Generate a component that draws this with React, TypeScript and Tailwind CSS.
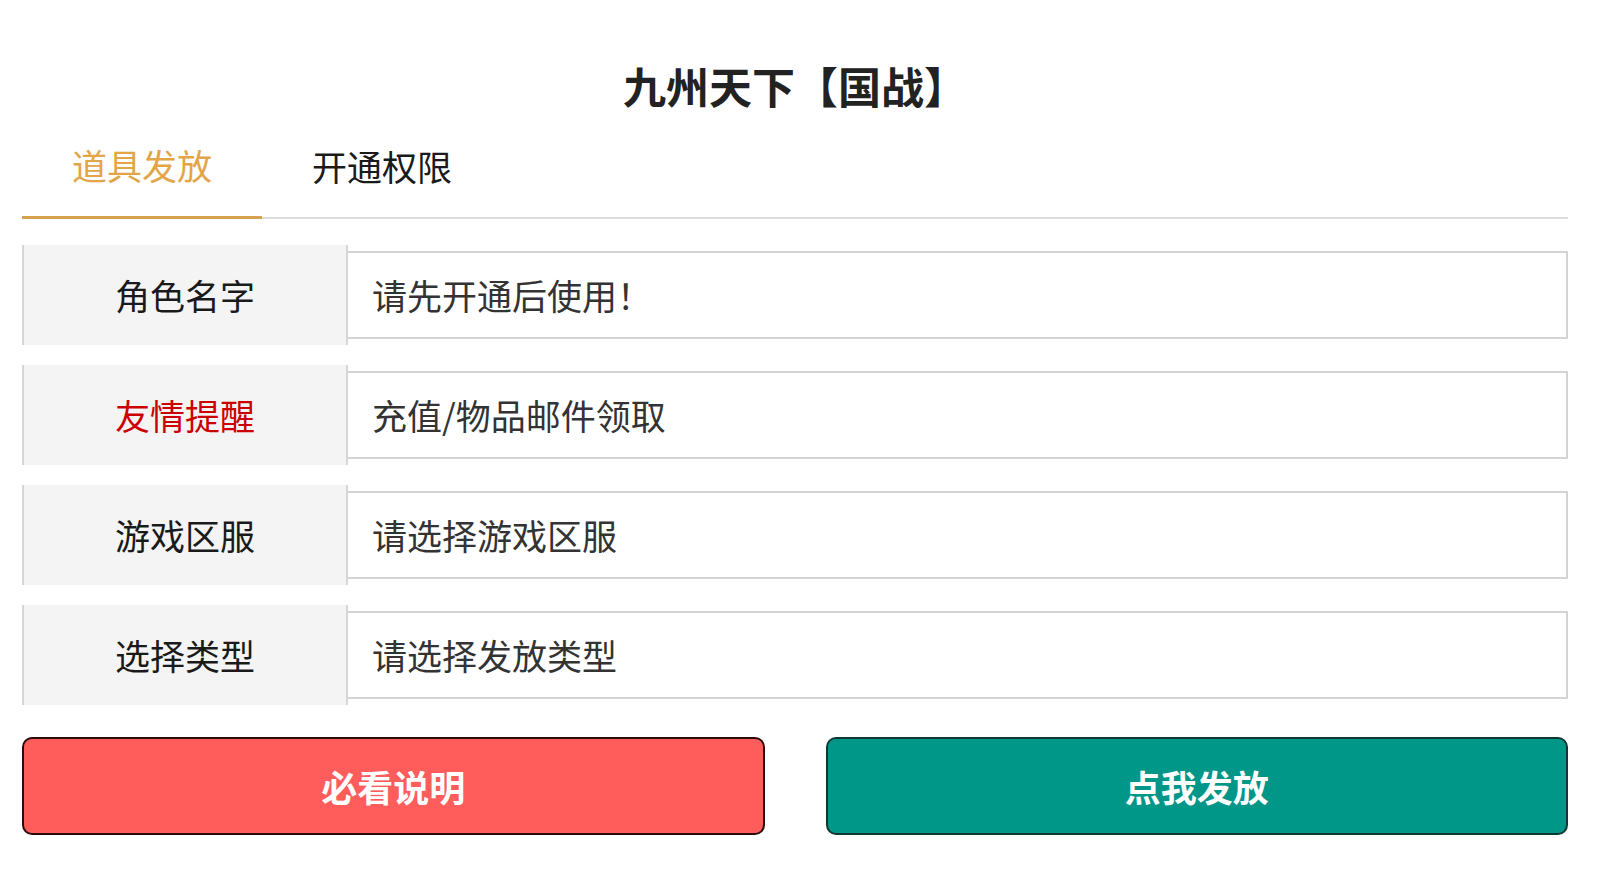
import React from "react";

const rows = [
  { label: "角色名字", value: "请先开通后使用！", red: false },
  { label: "友情提醒", value: "充值/物品邮件领取", red: true },
  { label: "游戏区服", value: "请选择游戏区服", red: false },
  { label: "选择类型", value: "请选择发放类型", red: false },
];

export default function App() {
  return (
    <div
      className="w-[1600px] h-[880px] bg-white overflow-hidden"
      style={{ fontFamily: '"Microsoft YaHei", "Noto Sans CJK SC", "Noto Sans", sans-serif' }}
    >
      <div className="ml-[22px] w-[1546px]">
        <div className="pt-[60px] h-[110px] text-center text-[43px] leading-[50px] font-bold text-[#222]">
          九州天下【国战】
        </div>

        <div className="flex items-end">
          <div className="w-[240px] pt-[30px] pb-[26px] border-b-[3px] border-[#d6a24e] text-center text-[35px] leading-[50px] text-[#e2a548]">
            道具发放
          </div>
          <div className="w-[240px] pt-[30px] pb-[26px] border-b-2 border-[#dcdcdc] text-center text-[35px] leading-[50px] text-[#1a1a1a]">
            开通权限
          </div>
          <div className="flex-1 border-b-2 border-[#dcdcdc]" />
        </div>

        <div className="mt-[26px] flex flex-col gap-[20px]">
          {rows.map((r) => (
            <div key={r.label} className="flex h-[100px] items-center">
              <div
                className={
                  "w-[326px] h-full flex items-center justify-center bg-[#f4f4f4] border-l-2 border-r-2 border-[#d6d6d6] text-[35px] " +
                  (r.red ? "text-[#cc0000]" : "text-[#1a1a1a]")
                }
              >
                {r.label}
              </div>
              <div className="flex-1 h-[88px] flex items-center border-2 border-l-0 border-[#d4d4d4] pl-[24px] text-[35px] text-[#333]">
                {r.value}
              </div>
            </div>
          ))}
        </div>

        <div className="mt-[32px] flex gap-[61px]">
          <button className="flex-1 h-[98px] rounded-[10px] border-2 border-[#2a0b0b] bg-[#ff5c5c] text-white text-[36px] font-bold">
            必看说明
          </button>
          <button className="flex-1 h-[98px] rounded-[10px] border-2 border-[#0c3a33] bg-[#009688] text-white text-[36px] font-bold">
            点我发放
          </button>
        </div>
      </div>
    </div>
  );
}
